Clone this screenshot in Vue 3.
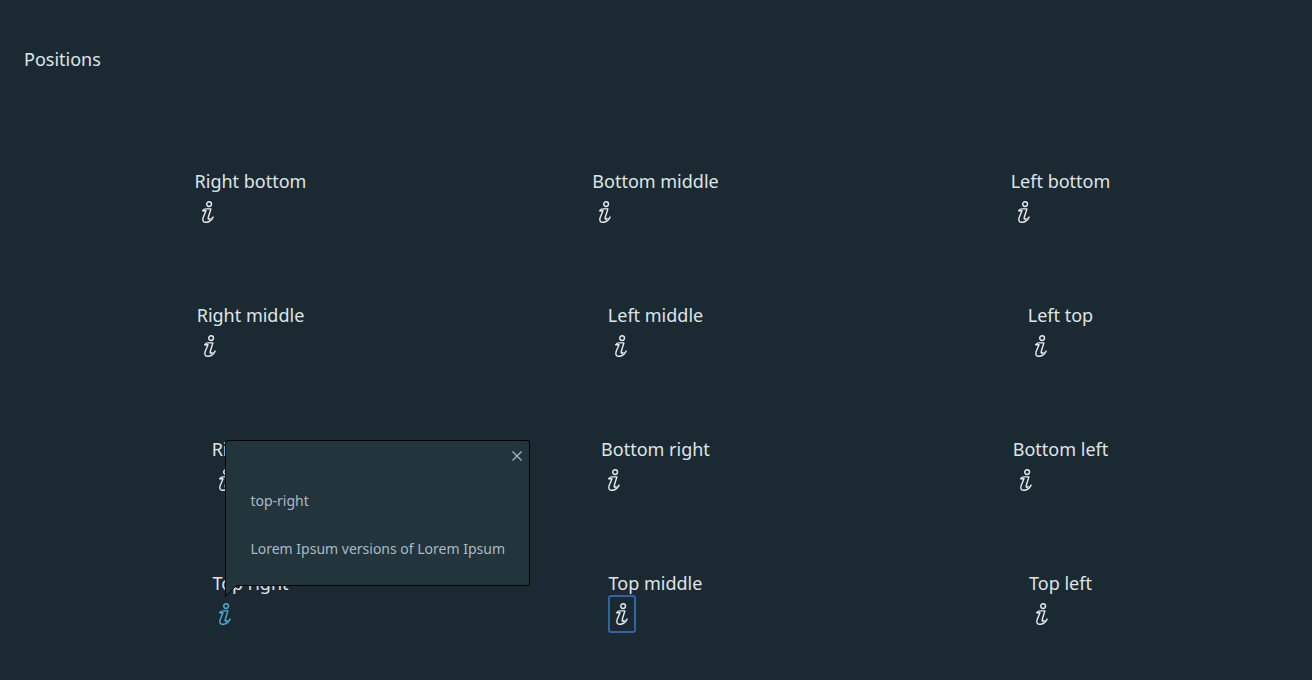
<script setup>
import { ref } from 'vue'

const items = [
  'Right bottom', 'Bottom middle', 'Left bottom',
  'Right middle', 'Left middle', 'Left top',
  'Right top', 'Bottom right', 'Bottom left',
  'Top right', 'Top middle', 'Top left'
]
const open = ref('Top right')
const focused = ref('Top middle')
</script>

<template>
  <main class="page">
    <h1 class="heading">Positions</h1>
    <div class="grid">
      <div v-for="item in items" :key="item" class="cell">
        <div class="item">
          <span class="label">{{ item }}</span>
          <div class="anchor">
            <button
              type="button"
              class="trigger"
              :class="{ active: open === item, focused: focused === item }"
              :aria-label="item"
              @click="open = item"
            >
              <svg class="info" viewBox="0 0 24 24" aria-hidden="true">
                <circle cx="13.1" cy="4.1" r="2.4" />
                <path d="M6.900 10.700C7.600 9.400 8.700 8.900 10 8.900h4.900L12.300 17.300c-.7 2.400.7 2.300 1.700 1.300" />
                <path d="M6.900 10.700h3.100L7.100 17.800c-1.200 3.500.9 4.900 3.600 4.400 2.700-.4 5-2.300 6.400-5.100" />
              </svg>
            </button>
            <section v-if="open === item" class="popup">
              <button type="button" class="close" aria-label="Close" @click="open = ''">
                <svg class="cross" viewBox="0 0 10 10" aria-hidden="true">
                  <path d="M.5.5l9 9M9.5.5l-9 9" />
                </svg>
              </button>
              <p class="line">top-right</p>
              <p class="line">Lorem Ipsum versions of Lorem Ipsum</p>
              <svg class="pointer" viewBox="0 0 12 12" aria-hidden="true">
                <path class="pointer-fill" d="M.5 0v11.5L11.5 .5V0z" />
                <path class="pointer-edge" d="M.5 0v11.5L11.5 .5" />
              </svg>
            </section>
          </div>
        </div>
      </div>
    </div>
  </main>
</template>

<style>
body {
  background: #1b2a32;
}
</style>

<style scoped>
.page {
  box-sizing: border-box;
  min-height: 100vh;
  padding: 47px 24px 0;
  background: #1b2a32;
  color: #dfe5e8;
  font-family: "Noto Sans", "Open Sans", sans-serif;
  font-size: 18px;
  line-height: 24px;
}
.heading {
  margin: 0 0 62px;
  font-size: 18px;
  font-weight: 400;
  line-height: 24px;
}
.grid {
  display: grid;
  grid-template-columns: repeat(3, 1fr);
  grid-auto-rows: 134px;
  padding: 0 25px 0 24px;
}
.cell {
  display: flex;
  align-items: center;
  justify-content: center;
}
.item {
  display: flex;
  flex-direction: column;
  align-items: flex-start;
}
.label {
  padding-bottom: 2px;
  line-height: 22px;
  white-space: nowrap;
}
.anchor {
  position: relative;
  display: flex;
}
.trigger {
  display: flex;
  align-items: center;
  justify-content: center;
  width: 26px;
  height: 36px;
  padding: 0;
  border: 0;
  border-radius: 2px;
  background: none;
  color: #e9ecef;
  cursor: pointer;
}
.trigger.active {
  color: #49afd9;
}
.trigger.focused {
  outline: 2px solid #3563a8;
  outline-offset: -1px;
}
.info {
  width: 24px;
  height: 24px;
  fill: none;
  stroke: currentColor;
  stroke-width: 1.4;
  stroke-linecap: round;
  stroke-linejoin: round;
}
.popup {
  position: absolute;
  z-index: 1;
  bottom: calc(100% + 10px);
  left: 50%;
  padding: 48px 24px 24px;
  border: 1px solid #000;
  border-radius: 3px 3px 3px 0;
  background: #22343c;
  color: #acbac3;
  font-size: 14px;
  white-space: nowrap;
}
.line {
  margin: 0;
}
.line + .line {
  margin-top: 24px;
}
.close {
  position: absolute;
  top: 3px;
  right: 0;
  display: flex;
  align-items: center;
  justify-content: center;
  width: 24px;
  height: 24px;
  padding: 0;
  border: 0;
  background: none;
  color: #acbac3;
  cursor: pointer;
}
.cross {
  width: 10px;
  height: 10px;
  fill: none;
  stroke: currentColor;
  stroke-width: 1.2;
}
.pointer {
  position: absolute;
  top: 100%;
  left: -1px;
  width: 12px;
  height: 12px;
}
.pointer-fill {
  fill: #22343c;
}
.pointer-edge {
  fill: none;
  stroke: #000;
}
</style>
